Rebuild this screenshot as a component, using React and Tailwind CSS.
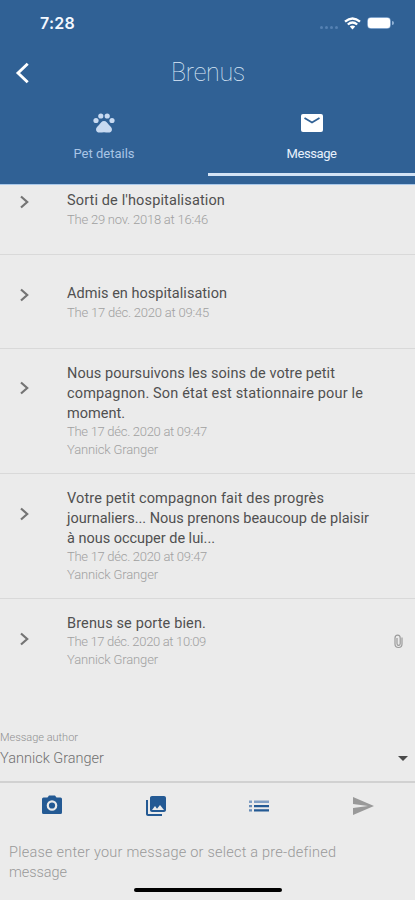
import { useLayoutEffect, useRef, useState } from "react";
import { MdPhotoLibrary, MdSend, MdArrowDropDown } from "react-icons/md";

// A single line of text whose tracking is adjusted to fill a given width.
function Line({ width, className = "", children }) {
  const ref = useRef(null);
  const [spacing, setSpacing] = useState(0);
  useLayoutEffect(() => {
    const natural = ref.current.getBoundingClientRect().width;
    setSpacing((width - natural) / children.length);
  }, []);
  return (
    <div className={`whitespace-nowrap ${className}`}>
      <span ref={ref} style={{ letterSpacing: `${spacing}px` }}>{children}</span>
    </div>
  );
}

const messages = [
  { box: "h-[70px] pt-[6px]", arrow: "mt-[4px]", gap: "", title: [["Sorti de l'hospitalisation", 158]], meta: [["The 29 nov. 2018 at 16:46", 141]] },
  { box: "h-[94px] pt-[29px]", arrow: "mt-[4px]", gap: "", title: [["Admis en hospitalisation", 160]], meta: [["The 17 déc. 2020 at 09:45", 142]] },
  {
    box: "h-[125px] pt-[15px]", arrow: "mt-[17px]", gap: "-mt-px",
    title: [["Nous poursuivons les soins de votre petit", 268], ["compagnon. Son état est stationnaire pour le", 296], ["moment.", 58]],
    meta: [["The 17 déc. 2020 at 09:47", 140], ["Yannick Granger", 91]],
  },
  {
    box: "h-[125px] pt-[15px]", arrow: "mt-[18px]", gap: "-mt-px",
    title: [["Votre petit compagnon fait des progrès", 257], ["journaliers... Nous prenons beaucoup de plaisir", 302], ["à nous occuper de lui...", 148]],
    meta: [["The 17 déc. 2020 at 09:47", 140], ["Yannick Granger", 91]],
  },
  {
    box: "h-[118px] pt-[15px]", arrow: "mt-[18px]", gap: "-mt-px", attachment: true, last: true,
    title: [["Brenus se porte bien.", 139]],
    meta: [["The 17 déc. 2020 at 10:09", 139], ["Yannick Granger", 91]],
  },
];

function StatusBar() {
  return (
    <div className="flex h-[46px] items-center justify-between pl-[40px] pr-[21px]">
      <Line width={35} className="font-['Inter',sans-serif] text-[16px] font-semibold text-[#f3f8ff]">7:28</Line>
      <div className="flex items-center">
        <div className="mr-[6px] mt-[8px] flex gap-[2px]">
          {[0, 1, 2, 3].map((i) => <i key={i} className="size-[3px] rounded-full bg-[#5581b3]" />)}
        </div>
        <svg className="h-[13px] w-[17px]" viewBox="0 0 17 13" fill="none" stroke="#fff" strokeWidth="2.3">
          <path d="M1 4.7Q8.5-1.8 16 4.7M3.8 7.5Q8.5 3.4 13.2 7.5" />
          <path d="M5.8 9.5Q8.5 7.4 11.2 9.5L8.5 12.4Z" fill="#fff" stroke="none" />
        </svg>
        <div className="ml-[6px] h-[12px] w-[24px] rounded-[4px] border border-[#7fa3cc]">
          <div className="h-full rounded-[2px] bg-white" />
        </div>
        <div className="ml-px h-[4px] w-[2px] rounded-r bg-[#91b1d5]" />
      </div>
    </div>
  );
}

function Paw() {
  return (
    <svg className="h-[20px] w-[22px]" viewBox="0 0 22 20" fill="currentColor">
      <circle cx="3" cy="7.5" r="2.6" />
      <circle cx="7.8" cy="3" r="2.6" />
      <circle cx="14.2" cy="3" r="2.6" />
      <circle cx="19" cy="7.5" r="2.6" />
      <path d="M11 8C13.3 8 14.3 10.2 16 11.9C17.8 13.7 19.4 15 18.9 17.2C18.5 19 17 19.7 15.3 19.6C13.8 19.5 12.5 19.2 11 19.2C9.5 19.2 8.2 19.5 6.7 19.6C5 19.7 3.5 19 3.1 17.2C2.6 15 4.2 13.7 6 11.9C7.7 10.2 8.7 8 11 8Z" />
    </svg>
  );
}

function PaperClip() {
  return (
    <svg className="mr-[11px] mt-[20px] h-[15px] w-[11px]" viewBox="0 0 11 15" fill="none" stroke="#9b9b9b" strokeWidth="1.2">
      <path d="M9 3.5V10Q9 13.5 5.5 13.5Q2 13.5 2 10V4Q2 1.2 4.7 1.2Q7.2 1.2 7.2 4V9.5Q7.2 11.4 5.6 11.4Q4 11.4 4 9.5V4" />
    </svg>
  );
}

function Message({ item }) {
  return (
    <div className={`flex shrink-0 ${item.box} ${item.last ? "" : "border-b border-[#d9d9d9]"}`}>
      <div className="w-[67px] shrink-0 pl-[19px]">
        <svg className={`h-[14px] w-[11px] ${item.arrow}`} viewBox="0 0 11 14" fill="none" stroke="#747474" strokeWidth="2.2">
          <path d="M2 1.5L8.2 7L2 12.5" />
        </svg>
      </div>
      <div className="flex-1">
        {item.title.map(([text, width]) => (
          <Line key={text} width={width} className="h-[20px] text-[14.5px] leading-[20px] text-[#505050]">{text}</Line>
        ))}
        <div className={item.gap}>
          {item.meta.map(([text, width]) => (
            <Line key={text} width={width} className="h-[18px] text-[13px] font-light leading-[18px] text-[#a0a0a0]">{text}</Line>
          ))}
        </div>
      </div>
      {item.attachment && <PaperClip />}
    </div>
  );
}

export default function App() {
  return (
    <div className="flex h-[900px] w-[415px] flex-col overflow-hidden bg-[#ebebeb] font-['Roboto','Liberation_Sans',sans-serif]">
      <header className="h-[185px] shrink-0 border-b border-[#a9c8e9] bg-[#306195]">
        <StatusBar />
        <div className="flex h-[54px] items-center">
          <div className="w-[171px] pl-[15px]">
            <svg className="h-[22px] w-[15px]" viewBox="0 0 15 22" fill="none" stroke="#fff" strokeWidth="2.9">
              <path d="M12.7 1.7L3 11L12.7 20.3" />
            </svg>
          </div>
          <Line width={74} className="text-[25px] font-thin text-[#dce9f8]">Brenus</Line>
        </div>
        <nav className="flex h-[76px]">
          <div className="flex w-[208px] flex-col items-center pt-[13px] text-[#c8daf1]">
            <Paw />
            <Line width={61} className="mt-[12px] text-[13px] leading-[18px] text-[#a9c5e6]">Pet details</Line>
          </div>
          <div className="flex flex-1 flex-col items-center border-b-[3px] border-[#d3e3f5] pt-[14px] text-white">
            <svg className="h-[18px] w-[22px]" viewBox="0 0 22 18" fill="none">
              <rect width="22" height="18" rx="2" fill="#fff" />
              <path d="M3.5 4L11 8.5L18.5 4" stroke="#306195" strokeWidth="1.8" />
            </svg>
            <Line width={50} className="mt-[13px] text-[13px] leading-[18px] text-[#e8f1fd]">Message</Line>
          </div>
        </nav>
      </header>

      <main className="flex h-[532px] shrink-0 flex-col overflow-hidden">
        {messages.map((item, i) => <Message key={i} item={item} />)}
      </main>

      <footer className="flex flex-1 flex-col">
        <div className="flex h-[66px] justify-between border-b-2 border-[#d1d1d1] pt-[13px]">
          <div>
            <Line width={78} className="h-[16px] text-[11px] font-light leading-[16px] text-[#909090]">Message author</Line>
            <Line width={104} className="mt-[2px] text-[14.5px] font-light leading-[22px] text-[#707070]">Yannick Granger</Line>
          </div>
          <MdArrowDropDown className="mt-[16px] size-[24px] text-[#4a4a4a]" />
        </div>
        <div className="grid h-[46px] grid-cols-4 place-items-center text-[#245a94]">
          <svg className="mb-[3px] h-[19px] w-[20px]" viewBox="0 0 20 19" fill="currentColor">
            <path d="M1.5 2.5H5.5L7 .5H13L14.5 2.5H18.5Q20 2.5 20 4V17.5Q20 19 18.5 19H1.5Q0 19 0 17.5V4Q0 2.5 1.5 2.5Z" />
            <circle cx="10" cy="10.5" r="4.2" fill="#245a94" stroke="#ebebeb" strokeWidth="2.2" />
          </svg>
          <MdPhotoLibrary className="size-[24px]" />
          <svg className="h-[12px] w-[20px]" viewBox="0 0 20 12" fill="currentColor">
            <path d="M0 .5H3V3H0ZM5 .5H20V3H5Z" fill="#819fc4" />
            <path d="M5 5H20V7.2H5ZM5 9.3H20V11.5H5Z" />
            <path d="M0 5H3V7.2H0ZM0 9.3H3V11.5H0Z" fill="#668bb6" />
          </svg>
          <MdSend className="size-[24px] text-[#999]" />
        </div>
        <div className="pl-[9px] pt-[14px] text-[14.5px] font-light leading-[20px] text-[#999]">
          <Line width={327}>Please enter your message or select a pre-defined</Line>
          <Line width={58}>message</Line>
        </div>
        <div className="ml-[134px] mt-[5px] h-[4px] w-[148px] rounded-full bg-black" />
      </footer>
    </div>
  );
}
